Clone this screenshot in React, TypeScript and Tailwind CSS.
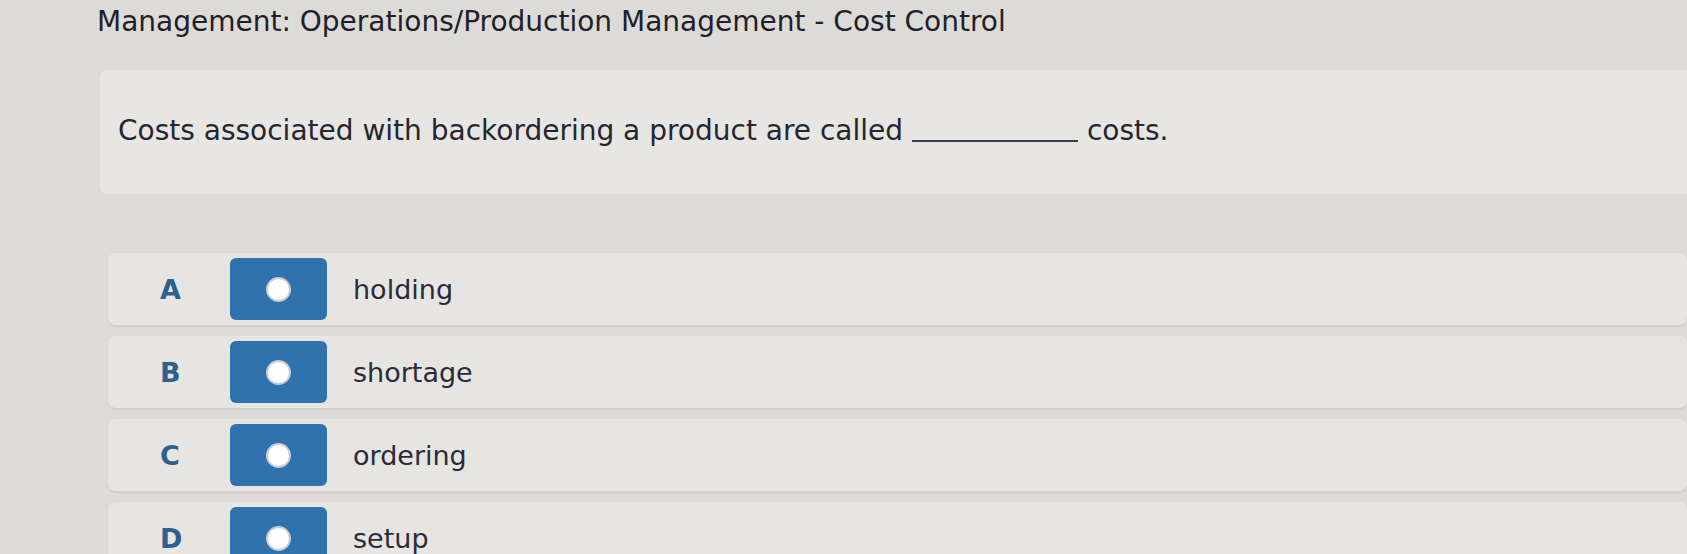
const options = [
  { key: "A", label: "holding" },
  { key: "B", label: "shortage" },
  { key: "C", label: "ordering" },
  { key: "D", label: "setup" },
];

function OptionRow({ letter, label }: { letter: string; label: string }) {
  return (
    <div className="flex h-[72px] items-center rounded-lg bg-[#e6e5e2] shadow-[0_2px_2px_rgba(0,0,0,0.06)]">
      <span className="w-[122px] pl-[52px] pt-[3px] text-[27px] font-bold text-[#2d5f8f]">{letter}</span>
      <button className="flex h-[62px] w-[97px] items-center justify-center rounded-[6px] bg-[#2f72ad]">
        <span className="h-[25px] w-[25px] rounded-full border-2 border-[#c9ccd0] bg-white" />
      </button>
      <span className="pl-[26px] pt-[3px] text-[27px] text-[#2a2b38]">{label}</span>
    </div>
  );
}

export default function App() {
  return (
    <div
      className="h-[554px] w-[1687px] overflow-hidden bg-[#dcdbd8]"
      style={{ fontFamily: '"DejaVu Sans", Verdana, sans-serif' }}
    >
      <h1 className="pl-[97px] pt-[4px] text-[28px] leading-[36px] font-normal text-[#1f2029]">
        Management: Operations/Production Management - Cost Control
      </h1>

      <div className="ml-[100px] mt-[30px] flex h-[124px] items-center rounded-l-lg bg-[#e7e6e3] pl-[18px] pb-[2px]">
        <p className="text-[28px] text-[#25262f]">
          Costs associated with backordering a product are called{" "}
          <span className="inline-block w-[166px] translate-y-[2px] border-b-2 border-[#3b3d48] align-baseline" />{" "}
          costs.
        </p>
      </div>

      <div className="ml-[108px] mt-[59px] flex flex-col gap-[11px]">
        {options.map((o) => (
          <OptionRow key={o.key} letter={o.key} label={o.label} />
        ))}
      </div>
    </div>
  );
}
